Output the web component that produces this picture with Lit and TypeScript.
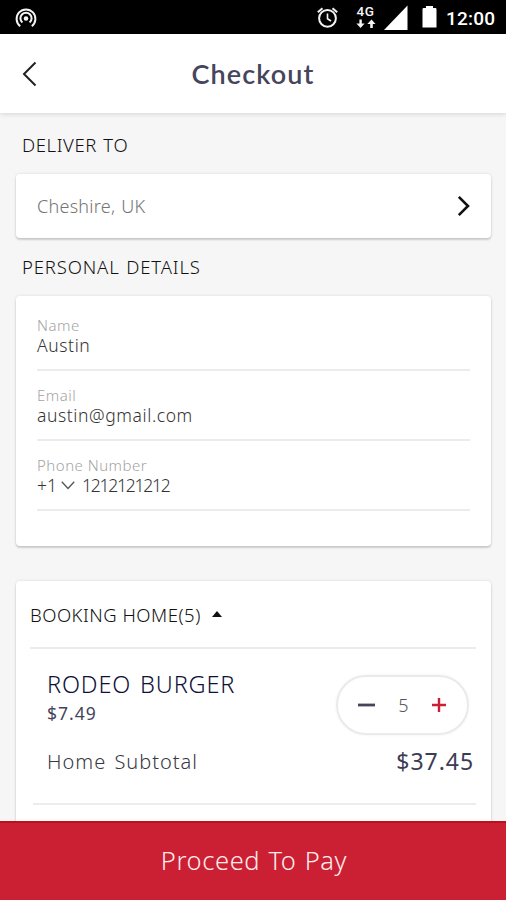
import { LitElement, html, css } from "lit";
import { customElement, property, state } from "lit/decorators.js";

@customElement("status-bar")
class StatusBar extends LitElement {
  static styles = css`
    :host { display: flex; align-items: center; height: 34px; flex: none; background: #000; color: #fff; }
    svg { display: block; flex: none; }
    .cast { margin-left: 14px; }
    .alarm { margin-left: auto; }
    .net { margin-left: 17px; }
    .signal { margin-left: 8px; }
    .battery { margin-left: 14px; }
    .time { width: 48px; margin: 3px 12px 0 9px; font: 500 19px/24px Roboto, sans-serif; letter-spacing: 0.2px; white-space: nowrap; }
    .g { font: 500 13.5px Roboto, sans-serif; letter-spacing: 0.6px; }
  `;
  render() {
    return html`
      <svg class="cast" width="24" height="34" viewBox="0 0 24 34" fill="none" stroke="#f4f4f4" stroke-width="2">
        <path d="M6.2 26.2A9.4 9.4 0 1 1 17.8 26.2" />
        <path d="M8.4 22.6A5.6 5.6 0 1 1 15.6 22.6" />
        <circle cx="12" cy="18.5" r="2.3" fill="#f4f4f4" stroke="none" />
      </svg>
      <svg class="alarm" width="22" height="34" viewBox="0 0 22 34" fill="none" stroke="#f4f4f4" stroke-width="2">
        <circle cx="11.5" cy="18.3" r="8.4" />
        <path d="M1.8 12.2L6.5 8.2M21.2 12.2L16.5 8.2" />
        <path d="M11.5 13.5V18.8L15 21" stroke-width="1.6" />
      </svg>
      <svg class="net" width="21" height="34" viewBox="0 0 21 34" fill="#f4f4f4">
        <text class="g" x="1.5" y="16.3">4G</text>
        <path d="M4.4 19.5h2.4v4h2.8L5.6 28 1.4 23.5h3zM15.2 28h2.6v-4h2.7L16.5 19.5 12.3 24h2.9z" />
      </svg>
      <svg class="signal" width="24" height="34" viewBox="0 0 24 34"><path d="M23.5 5.5V30H0z" fill="#fff" /></svg>
      <svg class="battery" width="15" height="34" viewBox="0 0 15 34"><path d="M4 6h7v2h2.300q1.200 0 1.200 1.200V27.500H.5V9.200Q.5 8 1.700 8H4z" fill="#fff" /></svg>
      <span class="time">12:00</span>
    `;
  }
}

@customElement("form-field")
class FormField extends LitElement {
  @property() label = "";
  @property() value = "";
  @property() prefixCode = "";
  static styles = css`
    :host { display: block; height: 70px; box-sizing: border-box; border-bottom: 2px solid #ececec; padding-top: 14px; }
    .label { font-size: 15px; line-height: 20px; color: #a4a4a4; font-weight: 300; letter-spacing: 0.5px; }
    .row { display: flex; align-items: center; font-size: 17.5px; line-height: 21px; color: #333; font-weight: 300; letter-spacing: 0.6px; }
    .code { letter-spacing: 0; }
    .digits { letter-spacing: -1.25px; }
    svg { margin: 0 7px 0 4px; }
  `;
  render() {
    return html`
      <div class="label">${this.label}</div>
      <div class="row">
        ${this.prefixCode
          ? html`<span class="code">${this.prefixCode}</span>
              <svg width="14" height="9" viewBox="0 0 14 9" fill="none" stroke="#555" stroke-width="1.3"><path d="M.8 .8L7 7.5 13.2 .8" /></svg>
              <span class="digits">${this.value}</span>`
          : html`<span>${this.value}</span>`}
      </div>
    `;
  }
}

@customElement("app-root")
class AppRoot extends LitElement {
  @state() private quantity = 5;
  private price = 7.49;

  static styles = css`
    :host { display: flex; flex-direction: column; height: 900px; width: 506px; overflow: hidden; background: #f6f6f6; font-family: "Noto Sans", "Open Sans", sans-serif; font-weight: 300; }
    svg { display: block; flex: none; }
    header { display: grid; grid-template-columns: 60px 1fr 60px; align-items: center; height: 79px; flex: none; background: #fff; box-shadow: 0 1px 5px rgba(0, 0, 0, 0.14); }
    .back { margin-left: 22px; }
    h1 { margin: 0; text-align: center; font: 600 27px/34px Lato, sans-serif; letter-spacing: 1.1px; color: #45455c; }
    main { flex: 1; min-height: 0; overflow: hidden; padding: 0 15px 0 16px; }
    h2 { margin: 0; padding-left: 6px; font-size: 18.5px; font-weight: 300; line-height: 24px; color: #111; white-space: nowrap; word-spacing: 1px; }
    .deliver { margin-top: 20px; letter-spacing: 0.6px; }
    .personal { margin-top: 17px; letter-spacing: 0.85px; }
    .card { background: #fff; border-radius: 4px; box-shadow: 0 0 3px rgba(0, 0, 0, 0.12), 0 2px 2px rgba(0, 0, 0, 0.15); box-sizing: border-box; }
    .address { display: flex; align-items: center; justify-content: space-between; height: 64px; margin-top: 17px; padding: 0 21px; font-size: 18px; color: #747474; letter-spacing: 0.25px; word-spacing: 1px; }
    .details { height: 250px; margin-top: 17px; padding: 5px 21px 0; }
    .booking { height: 300px; margin-top: 35px; padding: 0 15px 0 14px; }
    .group { display: flex; align-items: center; gap: 11px; height: 68px; box-sizing: border-box; border-bottom: 2px solid #ececec; font-size: 18.5px; color: #111; letter-spacing: 0.5px; }
    .item { display: flex; justify-content: space-between; align-items: flex-start; padding: 20px 7px 0 17px; }
    .name { font-size: 23.5px; line-height: 30px; color: #101038; letter-spacing: 0.85px; word-spacing: 2px; }
    .price { font-size: 17.5px; line-height: 28px; color: #44445a; font-weight: 400; letter-spacing: 1px; }
    .stepper { display: flex; align-items: center; justify-content: space-between; width: 133px; height: 60px; box-sizing: border-box; margin-top: 6px; padding: 0 21px 0 20px; border: 2px solid #eaeaea; border-radius: 30px; box-shadow: 0 0 3px rgba(0, 0, 0, 0.06); font-size: 18px; color: #555; }
    .subtotal { display: flex; justify-content: space-between; align-items: center; height: 70px; margin-left: 3px; padding: 0 2px 16px 14px; box-sizing: border-box; border-bottom: 2px solid #ececec; }
    .sub { font-size: 20px; color: #383842; letter-spacing: 1px; word-spacing: 2px; }
    .total { font-size: 23px; color: #3c3c54; font-weight: 400; letter-spacing: 0.95px; }
    .pay { flex: none; height: 79px; border: 0; border-top: 2px solid #be1019; box-sizing: border-box; background: #cb1f34; color: #ffecec; font: 300 25.5px/73px "Noto Sans", sans-serif; letter-spacing: 0.6px; word-spacing: 1px; padding: 0 0 3px 2px; text-align: center; }
  `;

  render() {
    return html`
      <status-bar></status-bar>
      <header>
        <svg class="back" width="16" height="26" viewBox="0 0 16 26" fill="none" stroke="#222" stroke-width="2"><path d="M13.5 1.500L2 13 13.500 24.500" /></svg>
        <h1>Checkout</h1>
      </header>
      <main>
        <h2 class="deliver">DELIVER TO</h2>
        <div class="card address">
          <span>Cheshire, UK</span>
          <svg width="13" height="22" viewBox="0 0 13 22" fill="none" stroke="#111" stroke-width="2.6"><path d="M1.8 1.8L11 11 1.8 20.2" /></svg>
        </div>
        <h2 class="personal">PERSONAL DETAILS</h2>
        <div class="card details">
          <form-field label="Name" value="Austin"></form-field>
          <form-field label="Email" value="austin@gmail.com"></form-field>
          <form-field label="Phone Number" .prefixCode=${"+1"} value="1212121212"></form-field>
        </div>
        <div class="card booking">
          <div class="group">
            <span>BOOKING HOME(${this.quantity})</span>
            <svg width="10" height="6" viewBox="0 0 10 6"><path d="M5 0l5 6H0z" fill="#111" /></svg>
          </div>
          <div class="item">
            <div>
              <div class="name">RODEO BURGER</div>
              <div class="price">$${this.price}</div>
            </div>
            <div class="stepper">
              <svg width="17" height="4" viewBox="0 0 17 4" @click=${() => this.quantity--}><path d="M0 2h17" stroke="#45455c" stroke-width="2.8" /></svg>
              <span>${this.quantity}</span>
              <svg width="14" height="14" viewBox="0 0 14 14" @click=${() => this.quantity++}><path d="M0 7h14M7 0v14" stroke="#cb1f34" stroke-width="2.4" /></svg>
            </div>
          </div>
          <div class="subtotal">
            <span class="sub">Home Subtotal</span>
            <span class="total">$${(this.price * this.quantity).toFixed(2)}</span>
          </div>
        </div>
      </main>
      <button class="pay">Proceed To Pay</button>
    `;
  }
}
